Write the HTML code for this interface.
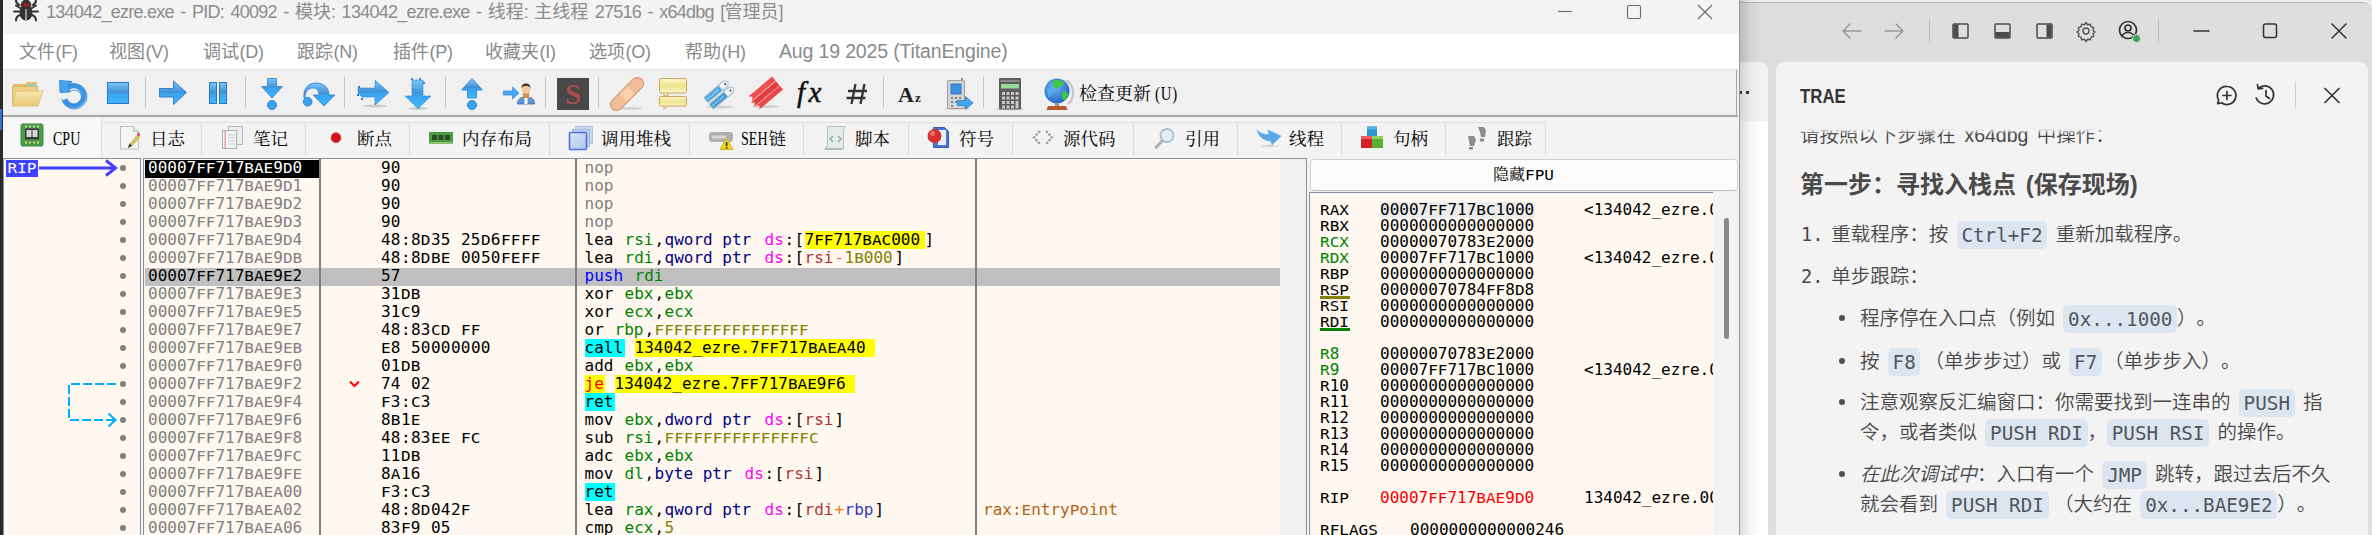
<!DOCTYPE html>
<html lang="zh-CN"><head><meta charset="utf-8"><title>x64dbg</title>
<style>
*{box-sizing:border-box;margin:0;padding:0}
html,body{width:2372px;height:535px;overflow:hidden;background:#f3f3f3}
body{position:relative;font-family:"Liberation Sans","Noto Sans CJK SC",sans-serif;color:#000}
.abs{position:absolute}
.t{position:absolute;white-space:pre;line-height:1}
#dbg{position:absolute;left:0;top:0;width:1740px;height:535px;background:#f0f0f0;overflow:hidden}
#trae{position:absolute;left:1740px;top:0;width:632px;height:535px;overflow:hidden;background:#f0f0f0}
.row{position:absolute;left:0;width:1740px;height:18px}
.m{position:absolute;top:-1px;height:18px;line-height:18px;font-family:"DejaVu Sans Mono","Liberation Mono",monospace;font-size:16px;white-space:pre}
.reg{position:absolute;height:16px;line-height:16px;font-family:"DejaVu Sans Mono","Liberation Mono",monospace;font-size:16px;white-space:pre}
.k{display:inline-block;height:18px;vertical-align:top}
.c{display:inline-block;transform:scaleY(.86);transform-origin:0 14.5px}
.reg .c{transform-origin:0 13.5px}
.l{letter-spacing:-0.75px}
.ml{font-size:18px;letter-spacing:-.2px;margin-left:.5px}
.pp{font-size:18px}
#title .l{word-spacing:2.2px}
.menu{position:absolute;top:40px;height:24px;line-height:24px;font-size:18px;color:#8a8a8a;white-space:pre}
.tab{position:absolute;top:122px;height:34px;border-right:1px solid #dcdcdc;border-top:1px solid #e2e2e2}
.tabt{position:absolute;top:128px;height:22px;line-height:22px;font-family:"Liberation Serif","Noto Serif CJK SC",serif;font-size:17.5px;color:#000;white-space:pre}
.nl{display:inline-block;transform:scaleX(.78);transform-origin:0 50%;font-size:18px;vertical-align:top}
.sep{position:absolute;top:77px;width:1px;height:31px;background:#c4c4c4}

#trae .bar{position:absolute;left:0;top:2px;width:632px;height:533px;background:#dedede;border-top:1px solid #b9b9b9;border-top-right-radius:9px}
#trae .lp{position:absolute;left:0;top:62px;width:28px;height:473px;background:#fff;border-top-right-radius:9px;overflow:hidden}
#trae .chat{position:absolute;left:36px;top:62px;width:592px;height:473px;background:#f3f3f3;border-radius:9px 9px 0 0;overflow:hidden}
#trae .ln{position:absolute;white-space:pre;text-spacing-trim:space-all;word-spacing:3px;font-size:19.5px;line-height:30px;height:30px;color:#484848;font-weight:350;font-family:"Liberation Sans","Noto Sans CJK SC",sans-serif}
#trae code{font-family:"DejaVu Sans Mono","Liberation Mono",monospace;font-size:19.25px;background:#dde5f0;color:#50565e;font-weight:400;border-radius:5px;padding:2.5px 4.7px 2.5px 4.7px;margin:0;word-spacing:0}
#trae .num{font-family:"DejaVu Sans Mono","Liberation Mono",monospace;font-size:18.6px;margin-right:-0.5px;margin-left:1px}
#trae .dot{position:absolute;left:63px;width:6.4px;height:6.4px;border-radius:3.2px;background:#505050;margin-top:-1px}
#trae svg{position:absolute;overflow:visible}
</style></head><body>
<div id="dbg">
<div class="abs" style="left:0;top:0;width:3px;height:535px;background:#2a2a2a"></div>
<div class="abs" style="left:0;top:109px;width:2px;height:21px;background:#3a6fd8"></div>
<div class="abs" style="left:3px;top:0;width:1736px;height:34px;background:#f3f3f3"></div>
<div class="t" id="title" style="left:46px;top:1px;font-size:18px;line-height:22px;color:#8c8c8c"><span class="l">134042_ezre.exe - PID: 40092 - </span>模块<span class="l">: 134042_ezre.exe - </span>线程<span class="l">: </span>主线程<span class="l"> 27516 - x64dbg [</span>管理员<span class="l">]</span></div>
<svg class="abs" style="left:13px;top:0;overflow:visible" width="26" height="22" viewBox="13 0 26 22"><g fill="none" stroke="#333" stroke-width="2" stroke-linecap="round"><path d="M19 5c-2-1-3-3-3-5M33 5c2-1 3-3 3-5M19.500 11.500h-5.500M32.500 11.500h5.500M20 8l-4-2.500M32 8l4-2.500M20 15c-3 1-4 3-4 5.500M32 15c3 1 4 3 4 5.500"/></g><ellipse cx="26" cy="12.500" rx="6.500" ry="8" fill="#333"/><path d="M20.500 6.500c0-4 2.500-7 5.500-7s5.500 3 5.500 7z" fill="#333"/><path d="M26 9v11" stroke="#f3f3f3" stroke-width="1"/><text x="26" y="6.500" text-anchor="middle" font-family="Liberation Sans,sans-serif" font-weight="bold" font-size="5.500" fill="#e01010">64</text></svg>
<div class="abs" style="left:3px;top:34px;width:1736px;height:35px;background:#ffffff"></div>
<div class="menu" style="left:19px">文件<span class="ml"><span class="pp">(</span>F<span class="pp">)</span></span></div>
<div class="menu" style="left:109px">视图<span class="ml"><span class="pp">(</span>V<span class="pp">)</span></span></div>
<div class="menu" style="left:203px">调试<span class="ml"><span class="pp">(</span>D<span class="pp">)</span></span></div>
<div class="menu" style="left:297px">跟踪<span class="ml"><span class="pp">(</span>N<span class="pp">)</span></span></div>
<div class="menu" style="left:393px">插件<span class="ml"><span class="pp">(</span>P<span class="pp">)</span></span></div>
<div class="menu" style="left:485px">收藏夹<span class="ml"><span class="pp">(</span>I<span class="pp">)</span></span></div>
<div class="menu" style="left:589px">选项<span class="ml"><span class="pp">(</span>O<span class="pp">)</span></span></div>
<div class="menu" style="left:685px">帮助<span class="ml"><span class="pp">(</span>H<span class="pp">)</span></span></div>
<div class="menu" style="left:779px;top:39px;font-size:19.5px;letter-spacing:-.15px">Aug 19 2025 (TitanEngine)</div>
<div class="abs" style="left:3px;top:69px;width:1736px;height:47px;background:#f0f0f0;border-top:1px solid #e8e8e8"></div>
<div class="abs" style="left:3px;top:115px;width:1735px;height:2px;background:#a8a8a8"></div>
<div class="abs" style="left:1736px;top:70px;width:1px;height:46px;background:#a8a8a8"></div>
<div class="sep" style="left:145px"></div>
<div class="sep" style="left:245px"></div>
<div class="sep" style="left:344px"></div>
<div class="sep" style="left:445px"></div>
<div class="sep" style="left:545px"></div>
<div class="sep" style="left:598px"></div>
<div class="sep" style="left:883px"></div>
<div class="sep" style="left:983px"></div>
<svg class="abs" style="left:0;top:70px;overflow:visible" width="1200" height="46" viewBox="0 70 1200 46">
<defs>
<linearGradient id="gb" x1="0" y1="0" x2="0" y2="1"><stop offset="0" stop-color="#7cc6f7"/><stop offset=".48" stop-color="#3f8fd6"/><stop offset=".52" stop-color="#3aa2ee"/><stop offset="1" stop-color="#3db8ff"/></linearGradient>
<linearGradient id="gf" x1="0" y1="0" x2="0" y2="1"><stop offset="0" stop-color="#f8e7b0"/><stop offset="1" stop-color="#e6c878"/></linearGradient>
<linearGradient id="gy" x1="0" y1="0" x2="0" y2="1"><stop offset="0" stop-color="#fdf8d0"/><stop offset=".5" stop-color="#ece58c"/><stop offset="1" stop-color="#fbf6c8"/></linearGradient>
<radialGradient id="gg" cx=".4" cy=".35" r=".7"><stop offset="0" stop-color="#6db4f2"/><stop offset="1" stop-color="#1f62c4"/></radialGradient>
</defs>
<!-- folder -->
<g><path d="M13 84h12l2-2h10v6H13z" fill="#e3c070"/><rect x="28" y="84" width="7" height="2" fill="#7fd0e8"/><path d="M12.500 86.500h25v19h-25z" fill="#edd08a" stroke="#d9b560"/><path d="M16 91h27l-5 15H12z" fill="url(#gf)" stroke="#dcbc6a" stroke-width=".8"/></g>
<!-- restart -->
<g fill="none" stroke="#3d97e6" stroke-width="5"><path d="M67 88.500a10 10 0 1 1-2.500 11"/></g>
<path d="M59.500 80.500l12.500 1-3.500 4.500 1.500 6-10 .5z" fill="#49a2ec" stroke="#2f7fd0" stroke-width=".8"/>
<g fill="none" stroke="#2f7fd0" stroke-width=".8"><path d="M68 85.500a12.600 12.600 0 1 1-6 13.500"/><path d="M70 91.500a7.400 7.400 0 1 1-3 7"/></g>
<!-- stop -->
<rect x="107.500" y="82.500" width="21" height="21" fill="url(#gb)" stroke="#2b78c4"/>
<!-- run -->
<path d="M159.500 88.500h14v-7.500l13 11.500-13 12v-7.500h-14z" fill="url(#gb)" stroke="#2b78c4" stroke-width=".9"/>
<!-- pause -->
<rect x="209.500" y="82.500" width="7" height="21" fill="url(#gb)" stroke="#2b78c4"/><rect x="219.500" y="82.500" width="7" height="21" fill="url(#gb)" stroke="#2b78c4"/>
<!-- step into -->
<path d="M267.500 78.500h9v8h6l-10.500 11.500-10.500-11.500h6z" fill="url(#gb)" stroke="#3b8ad6" stroke-width=".9"/><circle cx="272" cy="105" r="4.500" fill="#39a4f2" stroke="#2b78c4" stroke-width=".9"/>
<!-- step over -->
<path d="M304 98c-1-9 4-15 12-15 8 0 13 5 13 12h6l-11 11-11-11h6c0-4-2-7-6-7-5 0-8 4-8 10z" fill="url(#gb)" stroke="#3b8ad6" stroke-width=".9"/><circle cx="307.700" cy="101.700" r="4.300" fill="#39a4f2" stroke="#2b78c4" stroke-width=".9"/>
<!-- trace into -->
<path d="M358 88h17v-8l14 12.500-14 12.500v-8h-13l-4-4z" fill="url(#gb)" stroke="#3b8ad6" stroke-width=".9" stroke-dasharray="2.500 1"/>
<g fill="#2b78c4"><rect x="357" y="94" width="2" height="2"/><rect x="361" y="98" width="2" height="2"/><rect x="358" y="86" width="2" height="2"/></g>
<ellipse cx="375" cy="106" rx="12" ry="1.500" fill="#000" opacity=".15"/>
<!-- trace over -->
<path d="M412 80h11v16h8l-13 12.500-13-12.500h7z" fill="url(#gb)" stroke="#3b8ad6" stroke-width=".9" stroke-dasharray="2.500 1"/>
<g fill="#3b8ad6"><rect x="411" y="78" width="2" height="2"/><rect x="419" y="78" width="2" height="2"/><rect x="423" y="82" width="2" height="2"/></g>
<ellipse cx="418" cy="108.500" rx="10" ry="1.500" fill="#000" opacity=".15"/>
<!-- run till return -->
<path d="M472 78.500l10.500 11.500h-6v8h-9v-8h-6z" fill="url(#gb)" stroke="#3b8ad6" stroke-width=".9"/><circle cx="472" cy="105" r="4.500" fill="#39a4f2" stroke="#2b78c4" stroke-width=".9"/>
<!-- run to user code -->
<path d="M503.500 91h9v-4l6.500 6-6.500 6v-4h-9z" fill="#4aa8f0" stroke="#3b8ad6" stroke-width=".8"/>
<path d="M517.500 104c0-5 3-7 8.500-7s8.500 2 8.500 7z" fill="#5a96d8" stroke="#3b6fb0" stroke-width=".8"/><rect x="523" y="92" width="6" height="7" fill="#c89058"/><rect x="524.500" y="98" width="3" height="6" fill="#fff"/><circle cx="526" cy="89.500" r="4.300" fill="#f2c8a0"/><path d="M521.500 88.500c0-4 2-5 4.500-5s4.500 1 4.500 5c-1-2-2-2.500-4.500-2.500s-3.500.5-4.500 2.500z" fill="#4a3028"/>
<!-- scylla -->
<rect x="557" y="78" width="32" height="32" fill="#484848"/>
<text x="573" y="104" text-anchor="middle" font-family="'Liberation Serif',serif" font-weight="bold" font-size="29" fill="#a84c50">S</text>
<!-- patches -->
<ellipse cx="629" cy="108.500" rx="14" ry="1.500" fill="#000" opacity=".12"/>
<g transform="rotate(-45 627 94)"><rect x="606" y="88" width="42" height="12" rx="6" fill="#f1bc9a" stroke="#d6946a"/><rect x="621.500" y="89" width="11" height="10" fill="#f9d4ac" opacity=".9"/></g>
<!-- comments -->
<rect x="659.500" y="78.500" width="27" height="14.500" rx="1.500" fill="url(#gy)" stroke="#d2a55e"/><path d="M664 93v3h3.500v-3" fill="#f3ecb0" stroke="#d2a55e"/>
<rect x="659.500" y="96.500" width="27" height="9.500" rx="1.500" fill="url(#gy)" stroke="#d2a55e"/><path d="M664 106v3.500l3.500-3.500" fill="#f3ecb0" stroke="#d2a55e"/>
<!-- labels -->
<ellipse cx="720" cy="107" rx="14" ry="1.500" fill="#000" opacity=".12"/>
<g transform="rotate(-40 719 94)"><rect x="705" y="87" width="26" height="6.500" rx="1" fill="#4aa8e8" stroke="#a9bec6"/><path d="M724 87h7l3 3.250-3 3.250h-7z" fill="#f4f8fa" stroke="#a9bec6"/><rect x="705" y="95.500" width="26" height="6.500" rx="1" fill="#3f9ce0" stroke="#a9bec6"/><path d="M724 95.500h7l3 3.250-3 3.250h-7z" fill="#f4f8fa" stroke="#a9bec6"/><circle cx="730" cy="90.250" r="1.100" fill="#555"/><circle cx="730" cy="98.750" r="1.100" fill="#555"/><path d="M707 90.250h15M707 98.750h15" stroke="#bfe0f6" stroke-width="1.500" stroke-dasharray="1.500 1.500"/></g>
<!-- bookmarks -->
<ellipse cx="766" cy="106.500" rx="14" ry="1.500" fill="#000" opacity=".12"/>
<g transform="rotate(-40 765 93)"><path d="M750 85h31v5.500h-31l3-2.750z" fill="#ee5050"/><path d="M748 91h33v5.500h-33l3-2.750z" fill="#e23c3c"/><path d="M750 97h31v5h-31l3-2.500z" fill="#ea4848"/></g>
<!-- fx -->
<text x="797" y="101.500" font-family="'Liberation Serif',serif" font-style="italic" font-size="29" fill="#111" stroke="#111" stroke-width=".5">f</text><text x="808.500" y="101.500" font-family="'Liberation Serif',serif" font-style="italic" font-size="29" fill="#111" stroke="#111" stroke-width=".5">x</text>
<!-- hash -->
<path d="M855.500 84l-4 20M864.500 84l-4 20M848 91h19M846.500 98h19" fill="none" stroke="#333" stroke-width="2.300"/>
<!-- Az -->
<text x="898" y="101.500" font-family="'Liberation Serif',serif" font-weight="bold" font-size="22" fill="#222">A</text><text x="915" y="101.500" font-family="'Liberation Serif',serif" font-weight="bold" font-size="13" fill="#222">z</text>
<!-- phone -->
<ellipse cx="957" cy="108.500" rx="13" ry="1.500" fill="#000" opacity=".12"/>
<rect x="961" y="78" width="2" height="5" fill="#888"/><rect x="947.500" y="80.500" width="17" height="28" rx="1.500" fill="#d4d4d4" stroke="#a0a0a0"/><rect x="951" y="84" width="10" height="10" fill="#3f8fe0" stroke="#2b6cc0" stroke-width=".8"/>
<g fill="#888"><rect x="951" y="97" width="2" height="2"/><rect x="955" y="97" width="2" height="2"/><rect x="959" y="97" width="2" height="2"/><rect x="951" y="101" width="2" height="2"/><rect x="955" y="101" width="2" height="2"/><rect x="951" y="105" width="2" height="2"/></g>
<path d="M957.500 100.500h8v-4l7.500 6.500-7.500 6.500v-4h-8z" fill="#42aaf4" stroke="#2b78c4" stroke-width=".8"/>
<!-- calculator -->
<ellipse cx="1010" cy="109" rx="15" ry="1.500" fill="#000" opacity=".12"/>
<rect x="999" y="78" width="22" height="31.500" rx="1" fill="#5c5c5c"/><rect x="1000.500" y="80" width="19" height="2" fill="#8a8a8a"/><rect x="1001" y="84" width="18" height="4.500" fill="#98dc98"/>
<g fill="#c8c8c8"><rect x="1002" y="92" width="3" height="3"/><rect x="1006.500" y="92" width="3" height="3"/><rect x="1011" y="92" width="3" height="3"/><rect x="1015.500" y="92" width="3" height="3"/><rect x="1002" y="96.500" width="3" height="3"/><rect x="1006.500" y="96.500" width="3" height="3"/><rect x="1011" y="96.500" width="3" height="3"/><rect x="1015.500" y="96.500" width="3" height="3"/><rect x="1002" y="101" width="3" height="3"/><rect x="1006.500" y="101" width="3" height="3"/><rect x="1011" y="101" width="3" height="3"/><rect x="1015.500" y="101" width="3" height="7.500"/><rect x="1002" y="105.500" width="3" height="3"/><rect x="1006.500" y="105.500" width="3" height="3"/><rect x="1011" y="105.500" width="3" height="3"/></g>
<!-- globe -->
<path d="M1066 80a15 15 0 0 1 2 24" fill="none" stroke="#c4c8cc" stroke-width="2.400"/>
<circle cx="1057" cy="91" r="12.500" fill="url(#gg)"/><path d="M1052 81c4-2 9-1 12 2l-2 4-3-1-2 3-4-2 1-3zM1062 92l4-1 2 4-3 6-3-3z" fill="#3fc83f"/><path d="M1047 88l4 2 1 5-4 3z" fill="#58c0f0" opacity=".6"/>
<rect x="1055" y="103" width="4" height="3" fill="#999"/><path d="M1048 106h18l1.500 4h-21z" fill="#b8582c"/>
</svg>

<div class="t" style="left:1079px;top:82.5px;font-family:'Liberation Serif','Noto Serif CJK SC',serif;font-size:18px;line-height:22px;color:#000">检查更新<span class="nl" style="margin-left:4px;transform:scaleX(.82);letter-spacing:1px">(U)</span></div>
<div class="abs" style="left:3px;top:117px;width:1736px;height:418px;background:#f3f3f3"></div>
<div class="tab" style="left:3px;width:99px;top:118px;height:40px;background:#f7f7f7;border-top:none"></div>
<div class="tabt" style="left:53px"><span class="nl" style="width:27.6px">CPU</span></div>
<div class="tab" style="left:102px;width:100px"></div>
<div class="tabt" style="left:150px">日志</div>
<div class="tab" style="left:202px;width:104px"></div>
<div class="tabt" style="left:253px">笔记</div>
<div class="tab" style="left:306px;width:104px"></div>
<div class="tabt" style="left:357px">断点</div>
<div class="tab" style="left:410px;width:140px"></div>
<div class="tabt" style="left:462px">内存布局</div>
<div class="tab" style="left:550px;width:140px"></div>
<div class="tabt" style="left:601px">调用堆栈</div>
<div class="tab" style="left:690px;width:114px"></div>
<div class="tabt" style="left:741px"><span class="nl" style="width:27.6px">SEH</span>链</div>
<div class="tab" style="left:804px;width:104.5px"></div>
<div class="tabt" style="left:855px">脚本</div>
<div class="tab" style="left:908.5px;width:104px"></div>
<div class="tabt" style="left:959px">符号</div>
<div class="tab" style="left:1012.5px;width:121.5px"></div>
<div class="tabt" style="left:1063px">源代码</div>
<div class="tab" style="left:1134px;width:104px"></div>
<div class="tabt" style="left:1185px">引用</div>
<div class="tab" style="left:1238px;width:104px"></div>
<div class="tabt" style="left:1289px">线程</div>
<div class="tab" style="left:1342px;width:104px"></div>
<div class="tabt" style="left:1393px">句柄</div>
<div class="tab" style="left:1446px;width:100px"></div>
<div class="tabt" style="left:1497px">跟踪</div>
<svg class="abs" style="left:0;top:118px;overflow:visible" width="1560" height="40" viewBox="0 118 1560 40">
<defs><linearGradient id="tb" x1="0" y1="0" x2="1" y2="1"><stop offset="0" stop-color="#dce8f6"/><stop offset="1" stop-color="#a8c4e8"/></linearGradient></defs>
<!-- cpu -->
<rect x="21" y="124" width="22" height="22" rx="1.500" fill="#4c9c4a" stroke="#3c8a3c"/><rect x="25" y="128.500" width="14" height="11" fill="#3a3a3a"/><rect x="26.500" y="130" width="5" height="7" fill="#d8d8d8"/><rect x="32.500" y="130" width="5" height="7" fill="#d8d8d8"/><g fill="#c8d890"><rect x="25" y="141.500" width="2" height="2"/><rect x="29" y="141.500" width="2" height="2"/><rect x="33" y="141.500" width="2" height="2"/><rect x="37" y="141.500" width="2" height="2"/><rect x="25" y="125.500" width="2" height="2"/><rect x="29" y="125.500" width="2" height="2"/><rect x="33" y="125.500" width="2" height="2"/><rect x="37" y="125.500" width="2" height="2"/></g>
<!-- log -->
<path d="M120.500 126.500h13l5 5v17.500h-18z" fill="#f4f6f4" stroke="#b8c0bc"/><path d="M133.500 126.500v5h5" fill="#dfe4e0" stroke="#b8c0bc"/><path d="M128 148l1.500-4.500 8-9 3 2.500-8 9z" fill="#d8c060"/><path d="M128 148l1.500-4.500 2.500 2.500z" fill="#333"/><rect x="137" y="133" width="3" height="3" fill="#e06070"/>
<!-- notes -->
<rect x="228.500" y="126.500" width="14" height="18" fill="#eceeee" stroke="#b4b8b8"/><rect x="222.500" y="130.500" width="14" height="18" fill="#f4f6f8" stroke="#a8aeb0"/><rect x="224.500" y="131" width="1.500" height="17" fill="#e8a0a8"/><g stroke="#c0c8d8"><path d="M228 135h7M228 138h7M228 141h7M228 144h7"/></g>
<!-- breakpoints -->
<circle cx="336" cy="137.700" r="5" fill="#c81818"/><circle cx="336" cy="137.700" r="5" fill="none" stroke="#e05050" stroke-width=".8"/>
<!-- memory -->
<rect x="429" y="132" width="24" height="12" fill="#4c9c44"/><rect x="429" y="142" width="24" height="2" fill="#8cc070"/><g fill="#2c4c2c"><rect x="432" y="135" width="5" height="5"/><rect x="438.500" y="135" width="5" height="5"/><rect x="445" y="135" width="5" height="5"/></g>
<!-- callstack -->
<rect x="575.500" y="126.500" width="17" height="17" fill="#c8daf0" stroke="#b0c4e4"/><rect x="572.500" y="129.500" width="17" height="17" fill="#bcd2ee" stroke="#a4bce0"/><rect x="569.500" y="132.500" width="17" height="17" rx="1" fill="url(#tb)" stroke="#5070e0" stroke-width="1.600"/>
<!-- seh -->
<rect x="709" y="132" width="24" height="10" rx="3" fill="#b0b0b0"/><rect x="712" y="135.500" width="14" height="3" rx="1.500" fill="#d8d8d8"/><path d="M726.500 138l6.500 11.500h-13z" fill="#f0d020" stroke="#c8a810" stroke-width=".8"/><rect x="725.800" y="142" width="1.600" height="4" fill="#333"/><rect x="725.800" y="147" width="1.600" height="1.500" fill="#333"/>
<!-- script -->
<path d="M827.500 126.500h18l-2 4v18.500h-18l2-4z" fill="#e4ece8" stroke="#b4c4bc"/><path d="M824.500 149h18" stroke="#a8b8b0" stroke-width="1.600"/><path d="M833 136l-3 3 3 3M838 136l3 3-3 3" fill="none" stroke="#98a8a4" stroke-width="1.600"/>
<!-- symbols -->
<path d="M933.500 127.500h11l4 4v16h-15z" fill="#4878d0" stroke="#3858a8"/><rect x="938" y="130" width="8" height="15" fill="#e8eef8"/><circle cx="934.500" cy="136" r="7" fill="#d83030"/><circle cx="932.500" cy="133.500" r="2.500" fill="#f08080" opacity=".8"/>
<!-- source -->
<path d="M1040 131l-6 6.500 6 6.500M1046 131l6 6.500-6 6.500" fill="none" stroke="#9a9a9a" stroke-width="2.200" stroke-dasharray="2.500 1.200"/>
<!-- references -->
<circle cx="1167" cy="135.500" r="6.500" fill="#e4eef8" stroke="#b4bcc8" stroke-width="1.800"/><path d="M1162 141l-6 6.500" stroke="#b0b0b0" stroke-width="3" stroke-linecap="round"/>
<!-- threads -->
<path d="M1257 130c4 4 8 5 12 4l-1-4 13 6-9 9-1-4c-7 0-12-4-14-11z" fill="#58a8e8" stroke="#6cb4ec" stroke-width=".8"/><ellipse cx="1270" cy="146" rx="9" ry="1.200" fill="#000" opacity=".12"/>
<!-- handles -->
<rect x="1367" y="126.500" width="10" height="11" fill="#2c94d4"/><rect x="1367" y="126.500" width="10" height="3" fill="#58b4e8"/><rect x="1361" y="136" width="11" height="12" fill="#d82028"/><rect x="1361" y="136" width="11" height="3" fill="#f05860"/><rect x="1372" y="136" width="11" height="12" fill="#58b030"/><rect x="1372" y="136" width="11" height="3" fill="#90d060"/>
<!-- trace -->
<g fill="#8c8c8c"><path d="M1478 127h6l2 4-1 6h-4l-1-5z"/><rect x="1480" y="138.500" width="4" height="3"/><path d="M1468 136h6l2 4-2 6h-4l-1-5z"/><rect x="1469" y="147" width="4" height="2.500"/></g>
</svg>

<div class="abs" style="left:3px;top:158px;width:138px;height:377px;background:#FFF8F0;border:1px solid #8c9299;border-bottom:none"></div>
<div class="abs" style="left:141px;top:158px;width:2px;height:377px;background:#f3f3f3"></div>
<div class="abs" style="left:143px;top:158px;width:1px;height:377px;background:#8c9299"></div>
<div class="abs" style="left:144px;top:159px;width:1px;height:376px;background:#f4f4f4"></div>
<div class="abs" style="left:145px;top:159px;width:1135px;height:376px;background:#FFF8F0"></div>
<div class="abs" style="left:1280px;top:158px;width:26px;height:377px;background:#f0f0f0"></div>
<div class="abs" style="left:1306px;top:158px;width:1px;height:377px;background:#8c9299"></div>
<div class="abs" style="left:1307px;top:158px;width:3px;height:377px;background:#f3f3f3"></div>
<div class="abs" style="left:143px;top:158px;width:1164px;height:1px;background:#8c9299"></div>
<div class="row" style="top:160px"><div class="abs" style="left:145px;top:0;width:174px;height:18px;background:#000"></div><span class="m" style="left:148px;color:#fff">00007<span class="c">FF</span>717<span class="c">BAE</span>9<span class="c">D</span>0</span><div class="abs" style="left:119.8px;top:4.8px;width:6.4px;height:6.4px;border-radius:3.2px;background:#808080"></div> <span class="m" style="left:381px"><span class="k" style="width:20px">90</span></span> <span class="m" style="left:584.5px"><span class="k" style="width:30px;color:#808080">nop</span></span></div>
<div class="row" style="top:178px"><span class="m" style="left:148px;color:#808080">00007<span class="c">FF</span>717<span class="c">BAE</span>9<span class="c">D</span>1</span><div class="abs" style="left:119.8px;top:4.8px;width:6.4px;height:6.4px;border-radius:3.2px;background:#808080"></div> <span class="m" style="left:381px"><span class="k" style="width:20px">90</span></span> <span class="m" style="left:584.5px"><span class="k" style="width:30px;color:#808080">nop</span></span></div>
<div class="row" style="top:196px"><span class="m" style="left:148px;color:#808080">00007<span class="c">FF</span>717<span class="c">BAE</span>9<span class="c">D</span>2</span><div class="abs" style="left:119.8px;top:4.8px;width:6.4px;height:6.4px;border-radius:3.2px;background:#808080"></div> <span class="m" style="left:381px"><span class="k" style="width:20px">90</span></span> <span class="m" style="left:584.5px"><span class="k" style="width:30px;color:#808080">nop</span></span></div>
<div class="row" style="top:214px"><span class="m" style="left:148px;color:#808080">00007<span class="c">FF</span>717<span class="c">BAE</span>9<span class="c">D</span>3</span><div class="abs" style="left:119.8px;top:4.8px;width:6.4px;height:6.4px;border-radius:3.2px;background:#808080"></div> <span class="m" style="left:381px"><span class="k" style="width:20px">90</span></span> <span class="m" style="left:584.5px"><span class="k" style="width:30px;color:#808080">nop</span></span></div>
<div class="row" style="top:232px"><span class="m" style="left:148px;color:#808080">00007<span class="c">FF</span>717<span class="c">BAE</span>9<span class="c">D</span>4</span><div class="abs" style="left:119.8px;top:4.8px;width:6.4px;height:6.4px;border-radius:3.2px;background:#808080"></div> <span class="m" style="left:381px"><span class="k" style="width:20px">48</span><span class="k" style="width:10px">:</span><span class="k" style="width:20px">8<span class="c">D</span></span><span class="k" style="width:20px">35</span><span class="k" style="width:10px"> </span><span class="k" style="width:20px">25</span><span class="k" style="width:20px"><span class="c">D</span>6</span><span class="k" style="width:20px"><span class="c">FF</span></span><span class="k" style="width:20px"><span class="c">FF</span></span></span> <span class="m" style="left:584.5px"><span class="k" style="width:30px;color:#000">lea</span><span class="k" style="width:10px"> </span><span class="k" style="width:30px;color:#008300">rsi</span><span class="k" style="width:10px;color:#000">,</span><span class="k" style="width:90px;color:#000080">qword ptr</span><span class="k" style="width:10px"> </span><span class="k" style="width:20px;color:#FF00FF">ds</span><span class="k" style="width:10px;color:#000">:</span><span class="k" style="width:10px;color:#000">[</span><span class="k" style="width:120px;color:#000;background:#FFFF00">7<span class="c">FF</span>717<span class="c">BAC</span>000</span><span class="k" style="width:10px;color:#000">]</span></span></div>
<div class="row" style="top:250px"><span class="m" style="left:148px;color:#808080">00007<span class="c">FF</span>717<span class="c">BAE</span>9<span class="c">DB</span></span><div class="abs" style="left:119.8px;top:4.8px;width:6.4px;height:6.4px;border-radius:3.2px;background:#808080"></div> <span class="m" style="left:381px"><span class="k" style="width:20px">48</span><span class="k" style="width:10px">:</span><span class="k" style="width:20px">8<span class="c">D</span></span><span class="k" style="width:20px"><span class="c">BE</span></span><span class="k" style="width:10px"> </span><span class="k" style="width:20px">00</span><span class="k" style="width:20px">50</span><span class="k" style="width:20px"><span class="c">FE</span></span><span class="k" style="width:20px"><span class="c">FF</span></span></span> <span class="m" style="left:584.5px"><span class="k" style="width:30px;color:#000">lea</span><span class="k" style="width:10px"> </span><span class="k" style="width:30px;color:#008300">rdi</span><span class="k" style="width:10px;color:#000">,</span><span class="k" style="width:90px;color:#000080">qword ptr</span><span class="k" style="width:10px"> </span><span class="k" style="width:20px;color:#FF00FF">ds</span><span class="k" style="width:10px;color:#000">:</span><span class="k" style="width:10px;color:#000">[</span><span class="k" style="width:30px;color:#B03434">rsi</span><span class="k" style="width:10px;color:#F27711">-</span><span class="k" style="width:50px;color:#828200">1<span class="c">B</span>000</span><span class="k" style="width:10px;color:#000">]</span></span></div>
<div class="row" style="top:268px"><div class="abs" style="left:145px;top:0;width:1135px;height:18px;background:#C0C0C0"></div><span class="m" style="left:148px;color:#000">00007<span class="c">FF</span>717<span class="c">BAE</span>9<span class="c">E</span>2</span><div class="abs" style="left:119.8px;top:4.8px;width:6.4px;height:6.4px;border-radius:3.2px;background:#808080"></div> <span class="m" style="left:381px"><span class="k" style="width:20px">57</span></span> <span class="m" style="left:584.5px"><span class="k" style="width:40px;color:#0000FF">push</span><span class="k" style="width:10px"> </span><span class="k" style="width:30px;color:#008300">rdi</span></span></div>
<div class="row" style="top:286px"><span class="m" style="left:148px;color:#808080">00007<span class="c">FF</span>717<span class="c">BAE</span>9<span class="c">E</span>3</span><div class="abs" style="left:119.8px;top:4.8px;width:6.4px;height:6.4px;border-radius:3.2px;background:#808080"></div> <span class="m" style="left:381px"><span class="k" style="width:20px">31</span><span class="k" style="width:20px"><span class="c">DB</span></span></span> <span class="m" style="left:584.5px"><span class="k" style="width:30px;color:#000">xor</span><span class="k" style="width:10px"> </span><span class="k" style="width:30px;color:#008300">ebx</span><span class="k" style="width:10px;color:#000">,</span><span class="k" style="width:30px;color:#008300">ebx</span></span></div>
<div class="row" style="top:304px"><span class="m" style="left:148px;color:#808080">00007<span class="c">FF</span>717<span class="c">BAE</span>9<span class="c">E</span>5</span><div class="abs" style="left:119.8px;top:4.8px;width:6.4px;height:6.4px;border-radius:3.2px;background:#808080"></div> <span class="m" style="left:381px"><span class="k" style="width:20px">31</span><span class="k" style="width:20px"><span class="c">C</span>9</span></span> <span class="m" style="left:584.5px"><span class="k" style="width:30px;color:#000">xor</span><span class="k" style="width:10px"> </span><span class="k" style="width:30px;color:#008300">ecx</span><span class="k" style="width:10px;color:#000">,</span><span class="k" style="width:30px;color:#008300">ecx</span></span></div>
<div class="row" style="top:322px"><span class="m" style="left:148px;color:#808080">00007<span class="c">FF</span>717<span class="c">BAE</span>9<span class="c">E</span>7</span><div class="abs" style="left:119.8px;top:4.8px;width:6.4px;height:6.4px;border-radius:3.2px;background:#808080"></div> <span class="m" style="left:381px"><span class="k" style="width:20px">48</span><span class="k" style="width:10px">:</span><span class="k" style="width:20px">83</span><span class="k" style="width:20px"><span class="c">CD</span></span><span class="k" style="width:10px"> </span><span class="k" style="width:20px"><span class="c">FF</span></span></span> <span class="m" style="left:584.5px"><span class="k" style="width:20px;color:#000">or</span><span class="k" style="width:10px"> </span><span class="k" style="width:30px;color:#008300">rbp</span><span class="k" style="width:10px;color:#000">,</span><span class="k" style="width:160px;color:#828200"><span class="c">FFFFFFFFFFFFFFFF</span></span></span></div>
<div class="row" style="top:340px"><span class="m" style="left:148px;color:#808080">00007<span class="c">FF</span>717<span class="c">BAE</span>9<span class="c">EB</span></span><div class="abs" style="left:119.8px;top:4.8px;width:6.4px;height:6.4px;border-radius:3.2px;background:#808080"></div> <span class="m" style="left:381px"><span class="k" style="width:20px"><span class="c">E</span>8</span><span class="k" style="width:10px"> </span><span class="k" style="width:20px">50</span><span class="k" style="width:20px">00</span><span class="k" style="width:20px">00</span><span class="k" style="width:20px">00</span></span> <span class="m" style="left:584.5px"><span class="k" style="width:40px;color:#000;background:#00FFFF">call</span><span class="k" style="width:10px"> </span><span class="k" style="width:240px;color:#000;background:#FFFF00">134042_ezre.7<span class="c">FF</span>717<span class="c">BAEA</span>40</span></span></div>
<div class="row" style="top:358px"><span class="m" style="left:148px;color:#808080">00007<span class="c">FF</span>717<span class="c">BAE</span>9<span class="c">F</span>0</span><div class="abs" style="left:119.8px;top:4.8px;width:6.4px;height:6.4px;border-radius:3.2px;background:#808080"></div> <span class="m" style="left:381px"><span class="k" style="width:20px">01</span><span class="k" style="width:20px"><span class="c">DB</span></span></span> <span class="m" style="left:584.5px"><span class="k" style="width:30px;color:#000">add</span><span class="k" style="width:10px"> </span><span class="k" style="width:30px;color:#008300">ebx</span><span class="k" style="width:10px;color:#000">,</span><span class="k" style="width:30px;color:#008300">ebx</span></span></div>
<div class="row" style="top:376px"><span class="m" style="left:148px;color:#808080">00007<span class="c">FF</span>717<span class="c">BAE</span>9<span class="c">F</span>2</span><div class="abs" style="left:119.8px;top:4.8px;width:6.4px;height:6.4px;border-radius:3.2px;background:#808080"></div> <span class="m" style="left:381px"><span class="k" style="width:20px">74</span><span class="k" style="width:10px"> </span><span class="k" style="width:20px">02</span></span> <span class="m" style="left:584.5px"><span class="k" style="width:20px;color:#FF0000;background:#FFFF00">je</span><span class="k" style="width:10px"> </span><span class="k" style="width:240px;color:#000;background:#FFFF00">134042_ezre.7<span class="c">FF</span>717<span class="c">BAE</span>9<span class="c">F</span>6</span></span></div>
<div class="row" style="top:394px"><span class="m" style="left:148px;color:#808080">00007<span class="c">FF</span>717<span class="c">BAE</span>9<span class="c">F</span>4</span><div class="abs" style="left:119.8px;top:4.8px;width:6.4px;height:6.4px;border-radius:3.2px;background:#808080"></div> <span class="m" style="left:381px"><span class="k" style="width:20px"><span class="c">F</span>3</span><span class="k" style="width:10px">:</span><span class="k" style="width:20px"><span class="c">C</span>3</span></span> <span class="m" style="left:584.5px"><span class="k" style="width:30px;color:#000;background:#00FFFF">ret</span></span></div>
<div class="row" style="top:412px"><span class="m" style="left:148px;color:#808080">00007<span class="c">FF</span>717<span class="c">BAE</span>9<span class="c">F</span>6</span><div class="abs" style="left:119.8px;top:4.8px;width:6.4px;height:6.4px;border-radius:3.2px;background:#808080"></div> <span class="m" style="left:381px"><span class="k" style="width:20px">8<span class="c">B</span></span><span class="k" style="width:20px">1<span class="c">E</span></span></span> <span class="m" style="left:584.5px"><span class="k" style="width:30px;color:#000">mov</span><span class="k" style="width:10px"> </span><span class="k" style="width:30px;color:#008300">ebx</span><span class="k" style="width:10px;color:#000">,</span><span class="k" style="width:90px;color:#000080">dword ptr</span><span class="k" style="width:10px"> </span><span class="k" style="width:20px;color:#FF00FF">ds</span><span class="k" style="width:10px;color:#000">:</span><span class="k" style="width:10px;color:#000">[</span><span class="k" style="width:30px;color:#B03434">rsi</span><span class="k" style="width:10px;color:#000">]</span></span></div>
<div class="row" style="top:430px"><span class="m" style="left:148px;color:#808080">00007<span class="c">FF</span>717<span class="c">BAE</span>9<span class="c">F</span>8</span><div class="abs" style="left:119.8px;top:4.8px;width:6.4px;height:6.4px;border-radius:3.2px;background:#808080"></div> <span class="m" style="left:381px"><span class="k" style="width:20px">48</span><span class="k" style="width:10px">:</span><span class="k" style="width:20px">83</span><span class="k" style="width:20px"><span class="c">EE</span></span><span class="k" style="width:10px"> </span><span class="k" style="width:20px"><span class="c">FC</span></span></span> <span class="m" style="left:584.5px"><span class="k" style="width:30px;color:#000">sub</span><span class="k" style="width:10px"> </span><span class="k" style="width:30px;color:#008300">rsi</span><span class="k" style="width:10px;color:#000">,</span><span class="k" style="width:160px;color:#828200"><span class="c">FFFFFFFFFFFFFFFC</span></span></span></div>
<div class="row" style="top:448px"><span class="m" style="left:148px;color:#808080">00007<span class="c">FF</span>717<span class="c">BAE</span>9<span class="c">FC</span></span><div class="abs" style="left:119.8px;top:4.8px;width:6.4px;height:6.4px;border-radius:3.2px;background:#808080"></div> <span class="m" style="left:381px"><span class="k" style="width:20px">11</span><span class="k" style="width:20px"><span class="c">DB</span></span></span> <span class="m" style="left:584.5px"><span class="k" style="width:30px;color:#000">adc</span><span class="k" style="width:10px"> </span><span class="k" style="width:30px;color:#008300">ebx</span><span class="k" style="width:10px;color:#000">,</span><span class="k" style="width:30px;color:#008300">ebx</span></span></div>
<div class="row" style="top:466px"><span class="m" style="left:148px;color:#808080">00007<span class="c">FF</span>717<span class="c">BAE</span>9<span class="c">FE</span></span><div class="abs" style="left:119.8px;top:4.8px;width:6.4px;height:6.4px;border-radius:3.2px;background:#808080"></div> <span class="m" style="left:381px"><span class="k" style="width:20px">8<span class="c">A</span></span><span class="k" style="width:20px">16</span></span> <span class="m" style="left:584.5px"><span class="k" style="width:30px;color:#000">mov</span><span class="k" style="width:10px"> </span><span class="k" style="width:20px;color:#008300">dl</span><span class="k" style="width:10px;color:#000">,</span><span class="k" style="width:80px;color:#000080">byte ptr</span><span class="k" style="width:10px"> </span><span class="k" style="width:20px;color:#FF00FF">ds</span><span class="k" style="width:10px;color:#000">:</span><span class="k" style="width:10px;color:#000">[</span><span class="k" style="width:30px;color:#B03434">rsi</span><span class="k" style="width:10px;color:#000">]</span></span></div>
<div class="row" style="top:484px"><span class="m" style="left:148px;color:#808080">00007<span class="c">FF</span>717<span class="c">BAEA</span>00</span><div class="abs" style="left:119.8px;top:4.8px;width:6.4px;height:6.4px;border-radius:3.2px;background:#808080"></div> <span class="m" style="left:381px"><span class="k" style="width:20px"><span class="c">F</span>3</span><span class="k" style="width:10px">:</span><span class="k" style="width:20px"><span class="c">C</span>3</span></span> <span class="m" style="left:584.5px"><span class="k" style="width:30px;color:#000;background:#00FFFF">ret</span></span></div>
<div class="row" style="top:502px"><span class="m" style="left:148px;color:#808080">00007<span class="c">FF</span>717<span class="c">BAEA</span>02</span><div class="abs" style="left:119.8px;top:4.8px;width:6.4px;height:6.4px;border-radius:3.2px;background:#808080"></div> <span class="m" style="left:381px"><span class="k" style="width:20px">48</span><span class="k" style="width:10px">:</span><span class="k" style="width:20px">8<span class="c">D</span></span><span class="k" style="width:20px">04</span><span class="k" style="width:20px">2<span class="c">F</span></span></span> <span class="m" style="left:584.5px"><span class="k" style="width:30px;color:#000">lea</span><span class="k" style="width:10px"> </span><span class="k" style="width:30px;color:#008300">rax</span><span class="k" style="width:10px;color:#000">,</span><span class="k" style="width:90px;color:#000080">qword ptr</span><span class="k" style="width:10px"> </span><span class="k" style="width:20px;color:#FF00FF">ds</span><span class="k" style="width:10px;color:#000">:</span><span class="k" style="width:10px;color:#000">[</span><span class="k" style="width:30px;color:#B03434">rdi</span><span class="k" style="width:10px;color:#F27711">+</span><span class="k" style="width:30px;color:#3838BC">rbp</span><span class="k" style="width:10px;color:#000">]</span></span> <span class="m" style="left:983px;color:#B46414">rax:<span class="c">E</span>ntry<span class="c">P</span>oint</span></div>
<div class="row" style="top:520px"><span class="m" style="left:148px;color:#808080">00007<span class="c">FF</span>717<span class="c">BAEA</span>06</span><div class="abs" style="left:119.8px;top:4.8px;width:6.4px;height:6.4px;border-radius:3.2px;background:#808080"></div> <span class="m" style="left:381px"><span class="k" style="width:20px">83</span><span class="k" style="width:20px"><span class="c">F</span>9</span><span class="k" style="width:10px"> </span><span class="k" style="width:20px">05</span></span> <span class="m" style="left:584.5px"><span class="k" style="width:30px;color:#000">cmp</span><span class="k" style="width:10px"> </span><span class="k" style="width:30px;color:#008300">ecx</span><span class="k" style="width:10px;color:#000">,</span><span class="k" style="width:10px;color:#828200">5</span></span></div>
<div class="abs" style="left:319px;top:158px;width:2px;height:377px;background:#808080"></div>
<div class="abs" style="left:575px;top:158px;width:2px;height:377px;background:#808080"></div>
<div class="abs" style="left:975px;top:158px;width:2px;height:377px;background:#808080"></div>
<div class="abs" style="left:6px;top:160px;width:32px;height:17px;background:#4040FF"></div>
<span class="m" style="left:7.500px;top:159px;color:#fff"><span class="c">RIP</span></span>
<svg class="abs" style="left:0;top:158px;overflow:visible" width="145" height="377" viewBox="0 158 145 377" fill="none">
<path d="M39 168H115" stroke="#4040FF" stroke-width="3"/>
<path d="M106 160.500l9.500 7.500-9.500 7.500" stroke="#4040FF" stroke-width="3"/>
<path d="M116 384H69V420H114" stroke="#00AEFF" stroke-width="2" stroke-dasharray="9 3"/>
<path d="M108.500 413.500l7 6.500-7 6.500" stroke="#00AEFF" stroke-width="2"/>
</svg>
<svg class="abs" style="left:349px;top:380px;overflow:visible" width="12" height="8" viewBox="0 0 12 8" fill="none"><path d="M1 1.500l4.500 4.500 4.500-4.500" stroke="#FF0000" stroke-width="2"/></svg>

<div class="abs" style="left:1310px;top:160px;width:1428px;height:31px"></div>
<div class="abs" style="left:1310px;top:159px;width:428px;height:32px;background:#fdfdfd;border:1px solid #d0d0d0;border-bottom-color:#bdbdbd;border-radius:4px"></div>
<div class="t" style="left:1493px;top:165px;font-size:16px;line-height:20px;font-family:'Liberation Serif','Noto Serif CJK SC',serif">隐藏<span style="font-family:'DejaVu Sans Mono','Liberation Mono',monospace;font-size:16px;display:inline-block;transform:scaleY(.88);transform-origin:0 80%">FPU</span></div>
<div class="abs" style="left:1309px;top:192px;width:404px;height:343px;background:#FFF8F0;border-left:1px solid #8c9299;border-top:1px solid #8c9299;box-shadow:inset 1px 1px 0 #f4f4f4"></div>
<div class="abs" style="left:1713px;top:192px;width:26px;height:343px;background:#f3f3f3"></div>
<div class="abs" style="left:1724px;top:218px;width:5px;height:121px;border-radius:3px;background:#8a8a8a"></div>
<div class="abs" style="left:1312px;top:193px;width:401px;height:342px;overflow:hidden">
<span class="reg" style="left:8px;top:9px;color:#000"><span class="c">RAX</span></span><div class="abs" style="left:68px;top:9px;width:155px;height:16px;background:#ececec"></div> <span class="reg" style="left:68px;top:9px;color:#000">00007<span class="c">FF</span>717<span class="c">BC</span>1000</span> <span class="reg" style="left:272px;top:9px">&lt;134042_ezre.0</span>
<span class="reg" style="left:8px;top:25px;color:#000"><span class="c">RBX</span></span> <span class="reg" style="left:68px;top:25px;color:#000">0000000000000000</span>
<span class="reg" style="left:8px;top:41px;color:#008300"><span class="c">RCX</span></span> <span class="reg" style="left:68px;top:41px;color:#000">00000070783<span class="c">E</span>2000</span>
<span class="reg" style="left:8px;top:57px;color:#008300"><span class="c">RDX</span></span> <span class="reg" style="left:68px;top:57px;color:#000">00007<span class="c">FF</span>717<span class="c">BC</span>1000</span> <span class="reg" style="left:272px;top:57px">&lt;134042_ezre.0</span>
<span class="reg" style="left:8px;top:73px;color:#000"><span class="c">RBP</span></span> <span class="reg" style="left:68px;top:73px;color:#000">0000000000000000</span>
<span class="reg" style="left:8px;top:89px;color:#000"><span class="c">RSP</span></span> <span class="reg" style="left:68px;top:89px;color:#000">00000070784<span class="c">FF</span>8<span class="c">D</span>8</span><div class="abs" style="left:8px;top:103px;width:30px;height:3px;background:#828200"></div>
<span class="reg" style="left:8px;top:105px;color:#000"><span class="c">RSI</span></span> <span class="reg" style="left:68px;top:105px;color:#000">0000000000000000</span>
<span class="reg" style="left:8px;top:121px;color:#000"><span class="c">RDI</span></span> <span class="reg" style="left:68px;top:121px;color:#000">0000000000000000</span><div class="abs" style="left:8px;top:135px;width:30px;height:3px;background:#008300"></div>
<span class="reg" style="left:8px;top:153px;color:#008300"><span class="c">R</span>8</span> <span class="reg" style="left:68px;top:153px;color:#000">00000070783<span class="c">E</span>2000</span>
<span class="reg" style="left:8px;top:169px;color:#008300"><span class="c">R</span>9</span> <span class="reg" style="left:68px;top:169px;color:#000">00007<span class="c">FF</span>717<span class="c">BC</span>1000</span> <span class="reg" style="left:272px;top:169px">&lt;134042_ezre.0</span>
<span class="reg" style="left:8px;top:185px;color:#000"><span class="c">R</span>10</span> <span class="reg" style="left:68px;top:185px;color:#000">0000000000000000</span>
<span class="reg" style="left:8px;top:201px;color:#000"><span class="c">R</span>11</span> <span class="reg" style="left:68px;top:201px;color:#000">0000000000000000</span>
<span class="reg" style="left:8px;top:217px;color:#000"><span class="c">R</span>12</span> <span class="reg" style="left:68px;top:217px;color:#000">0000000000000000</span>
<span class="reg" style="left:8px;top:233px;color:#000"><span class="c">R</span>13</span> <span class="reg" style="left:68px;top:233px;color:#000">0000000000000000</span>
<span class="reg" style="left:8px;top:249px;color:#000"><span class="c">R</span>14</span> <span class="reg" style="left:68px;top:249px;color:#000">0000000000000000</span>
<span class="reg" style="left:8px;top:265px;color:#000"><span class="c">R</span>15</span> <span class="reg" style="left:68px;top:265px;color:#000">0000000000000000</span>
<span class="reg" style="left:8px;top:297px;color:#000"><span class="c">RIP</span></span> <span class="reg" style="left:68px;top:297px;color:#FF0000">00007<span class="c">FF</span>717<span class="c">BAE</span>9<span class="c">D</span>0</span> <span class="reg" style="left:272px;top:297px">134042_ezre.00</span>
<span class="reg" style="left:8px;top:329px;color:#000"><span class="c">RFLAGS</span></span> <span class="reg" style="left:98px;top:329px;color:#000">0000000000000246</span>
</div>
<div class="abs" style="left:1739px;top:0;width:1px;height:535px;background:#9a9a9a"></div>
<svg class="abs" style="left:1540px;top:0;overflow:visible" width="200" height="33" viewBox="1540 0 200 33" fill="none" stroke="#6a6a6a" stroke-width="1.100">
<path d="M1558 11.500h14"/><rect x="1627.500" y="5.500" width="13" height="13" rx="1.500"/><path d="M1698 5l14 14M1712 5l-14 14"/>
</svg>

</div>
<div id="trae">
<div class="abs" style="left:0;top:0;width:632px;height:12px;background:#efefef"></div>
<div class="bar"></div>
<div class="abs" style="left:0;top:0;width:22px;height:535px;background:linear-gradient(90deg,rgba(0,0,0,.16),rgba(0,0,0,.05) 45%,rgba(0,0,0,0))"></div>
<div class="lp"><div class="abs" style="left:0;top:0;width:28px;height:59px;background:#f3f3f3"></div>
<div class="abs" style="left:0;top:0;width:22px;height:473px;background:linear-gradient(90deg,rgba(0,0,0,.13),rgba(0,0,0,.04) 45%,rgba(0,0,0,0))"></div>
<div class="abs" style="left:-1px;top:28.500px;width:3px;height:3px;background:#333"></div><div class="abs" style="left:5.500px;top:28.500px;width:3px;height:3px;background:#333"></div></div>
<!-- title icons -->
<svg style="left:0;top:0" width="632" height="62" viewBox="0 0 632 62" fill="none" stroke="#9a9a9a" stroke-width="1.6" stroke-linecap="round" stroke-linejoin="round">
<path d="M121 31H103M110 24l-7 7 7 7"/>
<path d="M145 31h18M156 24l7 7-7 7"/>
<path d="M189.500 20v22" stroke="#bdbdbd" stroke-width="1"/>
<g stroke="#4a4a4a" stroke-width="1.5">
<rect x="213" y="24" width="15" height="14" rx="1"/><rect x="213.500" y="24.500" width="5" height="13" fill="#4a4a4a" stroke="none"/>
<rect x="255" y="24" width="15" height="14" rx="1"/><rect x="255.500" y="32" width="14" height="5.500" fill="#4a4a4a" stroke="none"/>
<rect x="297" y="24" width="15" height="14" rx="1"/><rect x="306.500" y="24.500" width="5" height="13" fill="#4a4a4a" stroke="none"/>
</g>
<g stroke="#555" stroke-width="1.4"><circle cx="346" cy="31" r="3"/><path d="M346 22.500l1.600 2.300 2.700-.600.800 2.600 2.600.900-.700 2.700 2 1.600-2 1.600.700 2.700-2.600.900-.800 2.600-2.700-.600-1.600 2.300-1.600-2.300-2.700.600-.800-2.600-2.600-.900.700-2.700-2-1.600 2-1.600-.700-2.700 2.600-.900.800-2.600 2.700.600z"/></g>
<g stroke="#333" stroke-width="1.7"><circle cx="388" cy="30" r="8.500"/><circle cx="388" cy="28" r="3"/><path d="M382 36.500c1-3 3.500-4 6-4s5 1 6 4"/></g>
<circle cx="396.500" cy="38.500" r="4" fill="#3aa35a" stroke="#dedede" stroke-width="1"/>
<path d="M418.500 20v22" stroke="#bdbdbd" stroke-width="1"/>
<g stroke="#333" stroke-width="1.5"><path d="M454 31h15"/><rect x="523.500" y="24" width="13" height="13.500" rx="2"/><path d="M592 24l14 14M606 24l-14 14"/></g>
</svg>
<div class="chat">
<div class="ln" style="left:24px;top:58px">请按照以下步骤在 x64dbg 中操作：</div>
<div class="abs" style="left:0;top:0;width:592px;height:67px;background:#f3f3f3"></div>
<div class="abs" style="left:0;top:67px;width:592px;height:5px;background:linear-gradient(180deg,#f3f3f3,rgba(243,243,243,0))"></div>
<div class="ln" style="left:24px;top:19px;font-weight:bold;color:#333;font-size:20px;transform:scaleX(.84);transform-origin:0 0">TRAE</div>
<svg style="left:0;top:0" width="592" height="66" viewBox="0 0 592 66" fill="none" stroke="#333" stroke-width="1.7" stroke-linecap="round" stroke-linejoin="round">
<path d="M451 24.500a9 9 0 1 1-5.500 16.200l-3.800 1 .900-3.700A9 9 0 0 1 451 24.500zM447 33.500h8M451 29.500v8"/>
<path d="M482.500 26.200a9 9 0 1 1-2.300 9.800M481.500 22.500l.600 4.500 4.500-.600M490 28.500v5.500l3.500 2.500"/>
<path d="M519.500 20v26" stroke="#cfcfcf" stroke-width="1"/>
<path d="M549 26.500l14 14M563 26.500l-14 14"/>
</svg>
<div class="ln" style="left:24px;top:108px;font-weight:bold;font-size:24px;color:#4a4a4a">第一步：寻找入栈点 (保存现场)</div>
<div class="ln" style="left:24px;top:157px"><span class="num">1.</span> 重载程序：按 <code>Ctrl+F2</code> 重新加载程序。</div>
<div class="ln" style="left:24px;top:199px"><span class="num">2.</span> 单步跟踪：</div>
<div class="dot" style="top:254px"></div>
<div class="ln" style="left:84px;top:241px">程序停在入口点（例如 <code>0x...1000</code>）。</div>
<div class="dot" style="top:297px"></div>
<div class="ln" style="left:84px;top:284px">按 <code>F8</code><span style="margin-left:4px"></span>（单步步过）或 <code>F7</code><span style="margin-left:2px"></span>（单步步入）。</div>
<div class="dot" style="top:338px"></div>
<div class="ln" style="left:84px;top:325px">注意观察反汇编窗口：你需要找到一连串的 <code>PUSH</code> 指</div>
<div class="ln" style="left:84px;top:355px">令，或者类似 <code>PUSH RDI</code>，<code>PUSH RSI</code> 的操作。</div>
<div class="dot" style="top:410px"></div>
<div class="ln" style="left:84px;top:397px"><i>在此次调试中</i>：入口有一个 <code>JMP</code> 跳转，跟过去后不久</div>
<div class="ln" style="left:84px;top:427px">就会看到 <code>PUSH RDI</code><span style="margin-left:5.5px"></span>（大约在 <code>0x...BAE9E2</code>）。</div>
</div>
<div class="abs" style="left:628px;top:62px;width:4px;height:473px;background:#dedede"></div>

</div>
</body></html>
